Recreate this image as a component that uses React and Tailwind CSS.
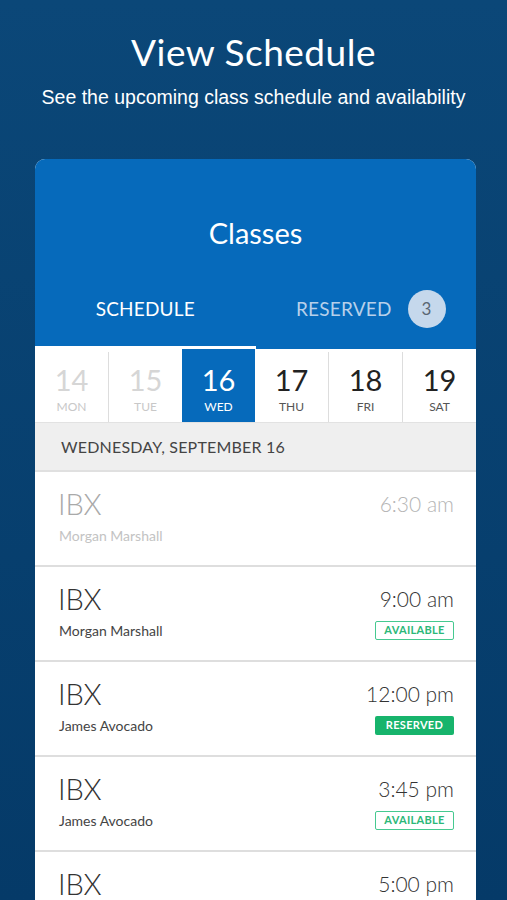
import React from "react";

const days = [
  { n: "14", d: "MON", state: "past" },
  { n: "15", d: "TUE", state: "past" },
  { n: "16", d: "WED", state: "sel" },
  { n: "17", d: "THU", state: "" },
  { n: "18", d: "FRI", state: "" },
  { n: "19", d: "SAT", state: "" },
];

const rows = [
  { name: "Morgan Marshall", time: "6:30 am", status: "past" },
  { name: "Morgan Marshall", time: "9:00 am", status: "available" },
  { name: "James Avocado", time: "12:00 pm", status: "reserved" },
  { name: "James Avocado", time: "3:45 pm", status: "available" },
  { name: "James Avocado", time: "5:00 pm", status: "available" },
];

export default function App() {
  return (
    <div
      className="w-[507px] h-[900px] overflow-hidden bg-gradient-to-b from-[#0b4778] to-[#053a68] flex flex-col items-center"
      style={{ fontFamily: "Lato, 'Open Sans', sans-serif" }}
    >
      <h1 className="shrink-0 mt-[28px] text-[37px] leading-[48px] text-white font-normal tracking-[0.5px]">
        View Schedule
      </h1>
      <p
        className="shrink-0 mt-[10px] text-[19.5px] leading-[22px] text-white"
        style={{ fontFamily: "'Liberation Sans', Arial, sans-serif" }}
      >
        See the upcoming class schedule and availability
      </p>
      <div className="shrink-0 mt-[51px] w-[441px] ml-[4px] rounded-t-[10px] overflow-hidden bg-white flex flex-col">
        <div className="shrink-0 bg-[#066abb] flex flex-col">
          <div className="h-[120px] flex items-end justify-center pb-[29px]">
            <span className="text-[29px] leading-[34px] text-white">Classes</span>
          </div>
          <div className="flex h-[70px]">
            <div className="w-1/2 flex flex-col items-center pt-[18px]">
              <span className="text-[19px] leading-[24px] text-white tracking-[0.2px]">SCHEDULE</span>
              <div className="mt-auto h-[3px] w-full bg-white" />
            </div>
            <div className="w-1/2 flex items-start justify-center gap-[16px] pt-[11px] pl-[10px]">
              <span className="mt-[7px] text-[19px] leading-[24px] text-[#b6d0ea] tracking-[0.2px]">RESERVED</span>
              <span className="w-[38px] h-[38px] rounded-full bg-[#c5d8ec] text-[#5a6673] text-[17px] flex items-center justify-center">
                3
              </span>
            </div>
          </div>
        </div>
        <div className="shrink-0 flex h-[73px] bg-white">
          {days.map((day, i) => (
            <div
              key={day.n}
              className={
                "flex-1 flex flex-col items-center " +
                (day.state === "sel"
                  ? "bg-[#066abb] text-white pt-[15px]"
                  : "bg-white mt-[3px] pt-[12px] " + (i < 5 && days[i + 1].state !== "sel" ? "border-r border-[#dddddd] " : ""))
              }
            >
              <span
                className={
                  "text-[29px] leading-[32px] " +
                  (day.state === "past" ? "text-[#d6d6d6]" : day.state === "sel" ? "text-white" : "text-[#222222]")
                }
              >
                {day.n}
              </span>
              <span
                className={
                  "mt-[3px] text-[12px] leading-[16px] " +
                  (day.state === "past" ? "text-[#c8c8c8]" : day.state === "sel" ? "text-white" : "text-[#555555]")
                }
              >
                {day.d}
              </span>
            </div>
          ))}
        </div>
        <div className="shrink-0 h-[50px] bg-[#efefef] border-t border-[#e2e2e2] border-b-2 border-b-[#e0e0e0] flex items-center pl-[26px]">
          <span className="text-[16px] text-[#444444] tracking-[0.2px]">WEDNESDAY, SEPTEMBER 16</span>
        </div>
        {rows.map((r, i) => {
          const past = r.status === "past";
          return (
            <div key={i} className="shrink-0 h-[95px] bg-white border-b-2 border-[#dedede] flex justify-between pl-[23px] pr-[22px] pt-[14px]">
              <div className="flex flex-col">
                <span className={"text-[29px] leading-[36px] font-light " + (past ? "text-[#a9a9a9]" : "text-[#333333]")}>IBX</span>
                <span className={"mt-[5px] ml-[1px] text-[14px] leading-[18px] " + (past ? "text-[#c3c3c3]" : "text-[#444444]")}>
                  {r.name}
                </span>
              </div>
              <div className="flex flex-col items-end">
                <span className={"mt-[4px] text-[21px] leading-[28px] font-light " + (past ? "text-[#b5b5b5]" : "text-[#333333]")}>
                  {r.time}
                </span>
                {r.status === "available" && (
                  <span className="mt-[8px] w-[79px] h-[19px] border border-[#46c990] rounded-[2px] text-[#2cb878] text-[11px] font-bold flex items-center justify-center tracking-[0.3px]">
                    AVAILABLE
                  </span>
                )}
                {r.status === "reserved" && (
                  <span className="mt-[8px] w-[79px] h-[19px] bg-[#17b46c] rounded-[2px] text-white text-[11px] font-bold flex items-center justify-center tracking-[0.3px]">
                    RESERVED
                  </span>
                )}
              </div>
            </div>
          );
        })}
      </div>
    </div>
  );
}
